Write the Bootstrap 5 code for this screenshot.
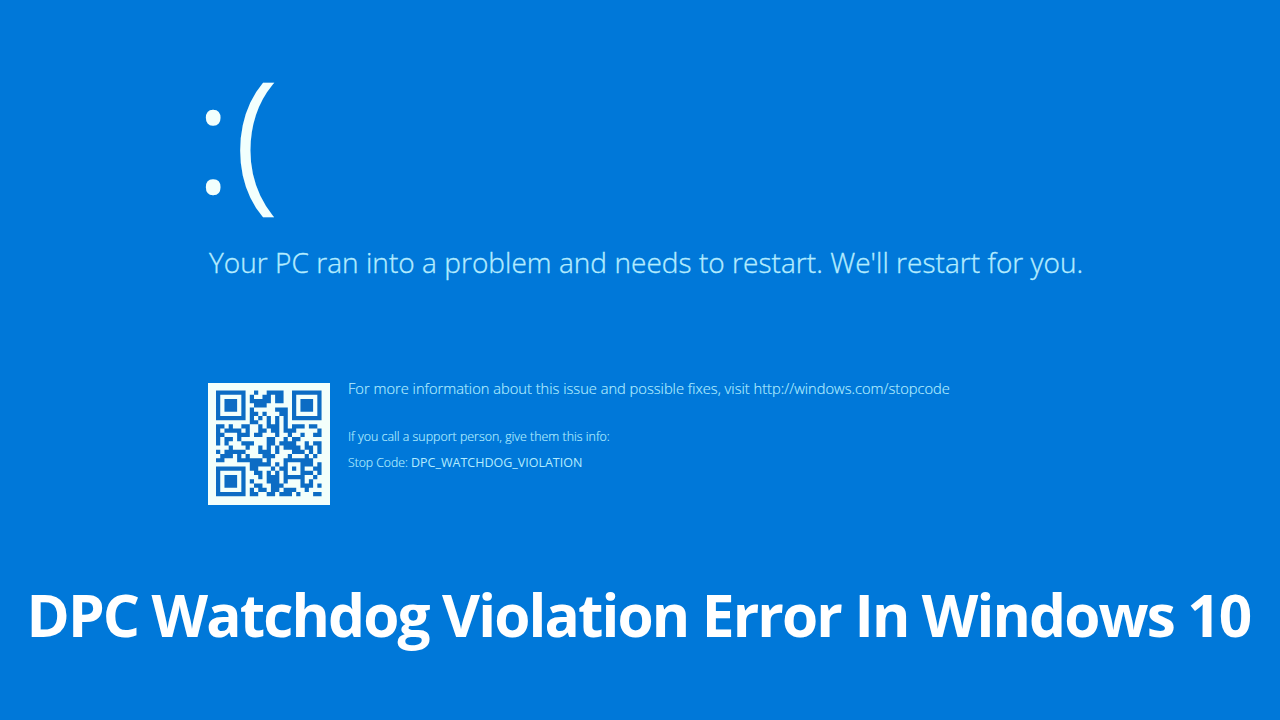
<!DOCTYPE html>
<html lang="en">

<head>
    <meta charset="UTF-8">
    <meta name="viewport" content="width=device-width, initial-scale=1.0">
    <title>DPC Watchdog Violation Error In Windows 10</title>
    <link href="https://cdn.jsdelivr.net/npm/bootstrap@5.3.2/dist/css/bootstrap.min.css" rel="stylesheet">
    <style>
        body {
            background-color: #0078d9;
            color: #b4ecff;
            font-family: "Open Sans", "Noto Sans", sans-serif;
            font-weight: 300;
        }

        .crash-screen {
            height: 720px;
            padding-top: 53px;
        }

        .crash-body {
            padding-left: 208px;
        }

        .sad-face {
            height: 188px;
            margin-left: -13px;
            color: #f2fffd;
            font-size: 152px;
            letter-spacing: 4px;
            line-height: 162px;
            -webkit-text-stroke: 2.6px #f2fffd;
        }

        .crash-message {
            height: 142px;
            padding-left: 1px;
            font-size: 28px;
            letter-spacing: 0.04px;
            line-height: 42px;
            -webkit-text-stroke: 0.35px #b4ecff;
        }

        .qr-code {
            width: 122px;
            height: 122px;
        }

        .crash-info {
            margin-top: -6px;
            padding-left: 18px;
            -webkit-text-stroke: 0.15px #b4ecff;
        }

        .info-link {
            margin-bottom: 29px;
            font-size: 14.66px;
            line-height: 22px;
        }

        .info-support {
            margin-bottom: 8px;
            font-size: 12.4px;
            line-height: 18px;
        }

        .info-stop {
            font-size: 12.2px;
            line-height: 18px;
        }

        .stop-name {
            font-size: 12.5px;
            font-weight: 400;
            -webkit-text-stroke: 0;
        }

        .page-title {
            margin-bottom: 66px;
            padding-right: 3px;
            color: #fff;
            font-size: 58.5px;
            font-weight: 700;
            letter-spacing: -1.87px;
            line-height: 80px;
        }
    </style>
</head>

<body>
    <main class="crash-screen d-flex flex-column justify-content-between overflow-hidden text-nowrap">
        <!-- Crash message -->
        <section class="crash-body">
            <div class="sad-face">:(</div>
            <p class="crash-message mb-0">Your PC ran into a problem and needs to restart. We'll restart for you.</p>

            <div class="d-flex align-items-start">
                <svg class="qr-code flex-shrink-0" viewBox="-1.9 -1.8 28.9 28.9" role="img" aria-label="QR code">
                    <rect x="-1.9" y="-1.8" width="28.9" height="28.9" fill="#f3fffb" />
                    <path id="qrModules" fill="#0c6cc4" />
                </svg>
                <div class="crash-info">
                    <p class="info-link">For more information about this issue and possible fixes, visit http://windows.com/stopcode</p>
                    <p class="info-support">If you call a support person, give them this info:</p>
                    <p class="info-stop mb-0">Stop Code: <span class="stop-name">DPC_WATCHDOG_VIOLATION</span></p>
                </div>
            </div>
        </section>

        <!-- Title -->
        <h1 class="page-title text-center">DPC Watchdog Violation Error In Windows 10</h1>
    </main>

    <script>
        // One 25-bit row of modules per entry, leftmost module first
        const qrRows = [
            0x1fc9e7f, 0x1053641, 0x175f65d, 0x174e05d, 0x175075d,
            0x105a341, 0x1fd557f, 0x0019500, 0x1a65d76, 0x17a6dc1,
            0x18ec493, 0x1681960, 0x1471bcb, 0x02255ed, 0x17c7475,
            0x0ea388a, 0x18fd1fc, 0x001f51d, 0x1fd8b53, 0x104d51d,
            0x1745df2, 0x1751d14, 0x174ce1d, 0x1056dc8, 0x1fd9ba3
        ];

        let modules = '';
        qrRows.forEach((row, y) => {
            for (let x = 0; x < 25; x++) {
                if (row >> (24 - x) & 1) {
                    modules += `M${x} ${y}h1v1h-1z`;
                }
            }
        });
        document.getElementById('qrModules').setAttribute('d', modules);
    </script>

    <script src="https://cdn.jsdelivr.net/npm/bootstrap@5.3.2/dist/js/bootstrap.bundle.min.js"></script>
</body>

</html>
